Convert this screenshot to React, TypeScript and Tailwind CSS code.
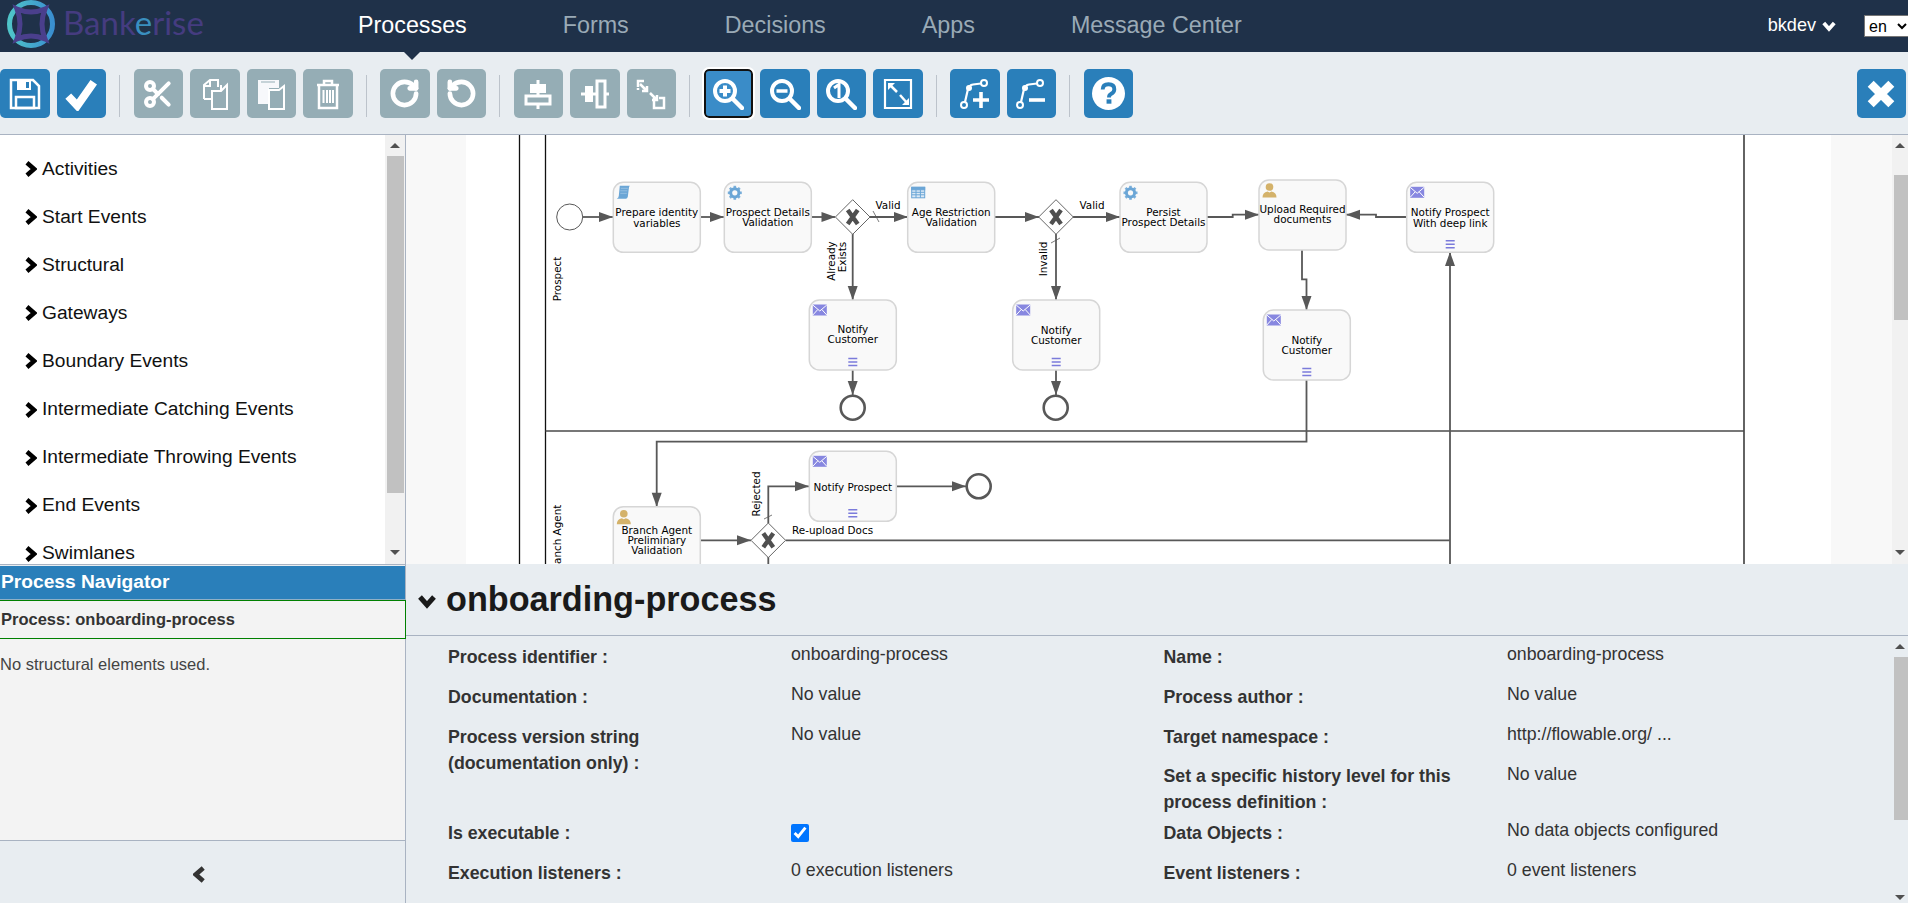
import React from 'react';
import { Scissors, RotateCw, RotateCcw } from 'lucide-react';

const Chevron: React.FC<{ dir: 'right' | 'down' | 'left'; className: string }> = ({ dir, className }) => {
    const points = dir === 'right' ? '3,2 11,9 3,16' : dir === 'left' ? '11,2 3,9 11,16' : '2,4 9,12 16,4';
    return (
        <svg viewBox={dir === 'down' ? '0 0 18 16' : '0 0 14 18'} className={className}>
            <polyline points={points} fill="none" stroke="currentColor" strokeWidth="5" />
        </svg>
    );
};

const I: React.FC<{ children: React.ReactNode; className?: string }> = ({ children, className = 'w-[32px] h-[32px]' }) => (
    <svg viewBox="0 0 32 32" className={className} fill="none" stroke="#fff" strokeWidth="2">{children}</svg>
);

// Toolbar glyphs, drawn to follow the reference strokes
const icons: Record<string, React.ReactNode> = {
    save: (
        <I>
            <path d="M2 2H24L30 8V30H2Z" strokeWidth="2.5" />
            <path d="M8 2H22V12H8Z" fill="#fff" stroke="none" />
            <path d="M17 4H20V10H17Z" fill="#2a7fba" stroke="none" />
            <path d="M7 19H25V30H7Z" strokeWidth="2.5" />
        </I>
    ),
    check: (
        <I className="w-[34px] h-[34px]">
            <path d="M4 18L12.5 27L28 5" strokeWidth="7.5" />
        </I>
    ),
    cut: <Scissors className="w-[32px] h-[32px] text-white" strokeWidth={3} />,
    copy: (
        <I>
            <path d="M5 21V7L11 2H19V9" />
            <path d="M5 21H12" />
            <path d="M11 2V8H5" />
            <path d="M13 13H22L28 7V31H13Z" />
            <path d="M22 7V13" />
        </I>
    ),
    paste: (
        <I>
            <path d="M3 2H24V10H14V26H3Z" fill="#f7f8fb" stroke="none" />
            <path d="M6 4H20" stroke="#95adb5" strokeWidth="1" />
            <path d="M14 12H24L29 8V31H14Z" />
        </I>
    ),
    trash: (
        <I>
            <path d="M5 7H27M12 7V3H20V7" strokeWidth="2.5" />
            <path d="M7 7V30H25V7" strokeWidth="2.5" />
            <path d="M11.5 12V25M15 12V25M18 12V25M21 12V25" strokeWidth="2" />
        </I>
    ),
    redo: <RotateCw className="w-[31px] h-[31px] text-white" strokeWidth={3.6} />,
    undo: <RotateCcw className="w-[31px] h-[31px] text-white" strokeWidth={3.6} />,
    alignV: (
        <I>
            <path d="M16 2V31" strokeWidth="3" />
            <path d="M9 7H23V14H9Z" fill="#fff" stroke="#fff" />
            <path d="M4 18H28V26H4Z" fill="#95adb5" strokeWidth="3" />
        </I>
    ),
    alignH: (
        <I>
            <path d="M2 16H30" strokeWidth="3" />
            <path d="M7 9H13V23H7Z" fill="#fff" stroke="#fff" />
            <path d="M18 3H26V29H18Z" fill="#95adb5" strokeWidth="3" />
        </I>
    ),
    sameSize: (
        <I>
            <path d="M3 9V3H9M3 12V10" strokeWidth="2.5" />
            <path d="M5 6L12 13M12 8V13H7" strokeWidth="2.5" />
            <path d="M19 20V30H29V20H24" strokeWidth="2.5" />
            <path d="M15 15L22 22M22 17V22H17" strokeWidth="2.5" />
        </I>
    ),
    zoomIn: (
        <I>
            <circle cx="13" cy="13" r="10" strokeWidth="4" />
            <path d="M21 21L30 30" strokeWidth="4.5" strokeLinecap="round" />
            <path d="M13 7.5V18.5M7.5 13H18.5" strokeWidth="4" />
        </I>
    ),
    zoomOut: (
        <I>
            <circle cx="13" cy="13" r="10" strokeWidth="4" />
            <path d="M21 21L30 30" strokeWidth="4.5" strokeLinecap="round" />
            <path d="M7.5 13H18.5" strokeWidth="3.5" />
        </I>
    ),
    zoomOne: (
        <I>
            <circle cx="13" cy="13" r="10" strokeWidth="4" />
            <path d="M21 21L30 30" strokeWidth="4.5" strokeLinecap="round" />
            <path d="M9 10L14 6.5V20" strokeWidth="3" />
        </I>
    ),
    fit: (
        <I>
            <path d="M3 2H29V30H3Z" strokeWidth="2.2" />
            <path d="M7 6L15 14" strokeWidth="2.5" />
            <path d="M6 5H13L6 12Z" fill="#fff" stroke="none" />
            <path d="M18 17L26 26" strokeWidth="2.5" />
            <path d="M27 27H20L27 20Z" fill="#fff" stroke="none" />
        </I>
    ),
    bendAdd: (
        <I>
            <circle cx="5" cy="27" r="3" />
            <circle cx="25" cy="5" r="3" />
            <path d="M6 24L9 11Q10 7 14 6.5L22 5.5" strokeWidth="2.2" />
            <circle cx="10" cy="10" r="3" fill="#fff" stroke="none" />
            <path d="M22 14V30M14 22H30" strokeWidth="3.6" />
        </I>
    ),
    bendRemove: (
        <I>
            <circle cx="5" cy="27" r="3" />
            <circle cx="25" cy="5" r="3" />
            <path d="M6 24L9 11Q10 7 14 6.5L22 5.5" strokeWidth="2.2" />
            <circle cx="10" cy="10" r="3" fill="#fff" stroke="none" />
            <path d="M14 22H30" strokeWidth="3.6" />
        </I>
    ),
    help: (
        <svg viewBox="0 0 34 34" className="w-[33px] h-[33px]">
            <circle cx="17" cy="17" r="17" fill="#fff" />
            <path d="M11 13Q11 7.5 17 7.5Q23 7.5 23 12.5Q23 15.5 19.5 17.5Q17.5 18.5 17.5 21" fill="none" stroke="#2a7fba" strokeWidth="4" />
            <rect x="15" y="23" width="5" height="4.5" fill="#2a7fba" />
        </svg>
    ),
    close: (
        <I className="w-[30px] h-[30px]">
            <path d="M5 5L27 27M27 5L5 27" strokeWidth="9" />
        </I>
    ),
};

const ToolButton: React.FC<{ icon: string; disabled?: boolean; focused?: boolean }> = ({ icon, disabled, focused }) => (
    <button
        className={
            'w-[49.5px] h-[49px] shrink-0 rounded-[5px] flex items-center justify-center ' +
            (disabled
                ? 'bg-[#95adb5]'
                : focused
                  ? 'bg-[#3a8cc8] border-2 border-[#111] outline-2 outline-white'
                  : 'bg-[#2a7fba]')
        }
    >
        {icons[icon]}
    </button>
);

const Sep = () => <div className="w-px h-[42px] mt-[6px] mx-[6.25px] bg-[#bcc3cb] shrink-0" />;

const ScrollTrack: React.FC<{ width: string; top: string; thumb: string; bottom: string; tone?: string }> = ({ width, top, thumb, bottom, tone = 'bg-[#f1f1f1]' }) => (
    <div className={'shrink-0 flex flex-col items-end ' + width + ' ' + tone}>
        <div className={'w-full flex items-center justify-center ' + top}>
            <div className="w-0 h-0 border-x-[5px] border-x-transparent border-b-[5px] border-b-[#505050]" />
        </div>
        <div className={'w-[14px] bg-[#c1c1c1] ' + thumb} />
        <div className={'mt-auto w-full flex items-center justify-center ' + bottom}>
            <div className="w-0 h-0 border-x-[5px] border-x-transparent border-t-[5px] border-t-[#505050]" />
        </div>
    </div>
);

const Task: React.FC<{ x: number; y: number; lines: [string, number][]; kind: string; menu?: boolean; h?: number }> = ({ x, y, lines, kind, menu, h = 70 }) => (
    <g>
        <rect x={x} y={y} width="87" height={h} rx="10" fill="#f9f9f9" stroke="#d6d6d6" strokeWidth="1.5" />
        <TaskIcon kind={kind} x={x + 3.5} y={y + 3.5} />
        {lines.map(([t, ty]) => (
            <text key={t} x={x + 43.5} y={ty + 3.5} textAnchor="middle">{t}</text>
        ))}
        {menu && (
            <path d={`M${x + 39} ${y + 58.5}H${x + 48}M${x + 39} ${y + 62}H${x + 48}M${x + 39} ${y + 65.5}H${x + 48}`} stroke="#7b7bdb" strokeWidth="1.5" />
        )}
    </g>
);

const TaskIcon: React.FC<{ kind: string; x: number; y: number }> = ({ kind, x, y }) => {
    if (kind === 'mail')
        return (
            <g transform={`translate(${x} ${y + 1})`}>
                <rect width="14" height="11" fill="#8787e0" />
                <path d="M0 0.5L7 6.5L14 0.5M0 10.5L5 5M14 10.5L9 5" fill="none" stroke="#fff" strokeWidth="1" />
            </g>
        );
    if (kind === 'gear')
        return (
            <g transform={`translate(${x + 7} ${y + 7})`}>
                <circle r="4.2" fill="none" stroke="#6ba6d6" strokeWidth="2.8" />
                {[0, 45, 90, 135].map((a) => (
                    <rect key={a} x="-1.3" y="-7" width="2.6" height="14" fill="#6ba6d6" transform={`rotate(${a})`} opacity="0.9" />
                ))}
                <circle r="2.6" fill="#f9f9f9" />
            </g>
        );
    if (kind === 'table')
        return (
            <g transform={`translate(${x} ${y + 1})`} fill="none" stroke="#6ba6d6" strokeWidth="1">
                <rect x="0.5" y="0.5" width="13" height="10.5" fill="#dbe9f5" />
                <rect x="0.5" y="0.5" width="13" height="2.5" fill="#6ba6d6" />
                <path d="M0.5 5.5H13.5M0.5 8H13.5M4.8 3V11M9.2 3V11" />
            </g>
        );
    if (kind === 'script')
        return (
            <g transform={`translate(${x} ${y})`}>
                <path d="M3 0H13Q12 1 12 3L11 11Q10.5 13 9 13H0Q2 12 2 10Z" fill="#6ba6d6" />
                <path d="M4 2.5H11M3.5 5H10.5M3.5 7.5H10" stroke="#a9cbe6" strokeWidth="0.7" />
            </g>
        );
    return (
        <g transform={`translate(${x} ${y - 1})`} fill="#d4b26a">
            <circle cx="7" cy="4.5" r="3.8" />
            <path d="M0 15Q0 10 5 9L7 10L9 9Q14 10 14 15Z" />
        </g>
    );
};

const Gateway: React.FC<{ x: number; y: number }> = ({ x, y }) => (
    <g>
        <path d={`M${x} ${y - 17.3}L${x + 17.3} ${y}L${x} ${y + 17.3}L${x - 17.3} ${y}Z`} fill="#fff" stroke="#666" strokeWidth="1" />
        <path d={`M${x - 5} ${y - 7}L${x + 5} ${y + 7}M${x + 5} ${y - 7}L${x - 5} ${y + 7}`} stroke="#4f4f4f" strokeWidth="4.4" />
    </g>
);

const Flow: React.FC<{ d: string; tip?: [number, number, 'r' | 'l' | 'u' | 'd'] }> = ({ d, tip }) => {
    let head = '';
    if (tip) {
        const [x, y, dir] = tip;
        if (dir === 'r') head = `${x},${y} ${x - 14},${y - 5} ${x - 14},${y + 5}`;
        if (dir === 'l') head = `${x},${y} ${x + 14},${y - 5} ${x + 14},${y + 5}`;
        if (dir === 'd') head = `${x},${y} ${x - 5},${y - 14} ${x + 5},${y - 14}`;
        if (dir === 'u') head = `${x},${y} ${x - 5},${y + 14} ${x + 5},${y + 14}`;
    }
    return (
        <g>
            <path d={d} fill="none" stroke="#585858" strokeWidth="1.8" />
            {tip && <polygon points={head} fill="#585858" />}
        </g>
    );
};

const Diagram = () => (
    <svg viewBox="466 135 1365 429" className="flex-1 h-full min-w-0 font-['DejaVu_Sans',sans-serif] text-[10.4px]">
        {/* Pool and lanes */}
        <path d="M519.5 135V564M545.5 135V564M1744 135V564" stroke="#111" strokeWidth="1.3" fill="none" />
        <path d="M545.5 431H1744" stroke="#4a4a4a" strokeWidth="1.5" />

        {/* Flows */}
        <Flow d="M583 217H613" tip={[613, 217, 'r']} />
        <Flow d="M700 217H724" tip={[724, 217, 'r']} />
        <Flow d="M811 217H835" tip={[835.5, 217, 'r']} />
        <Flow d="M870 217H908" tip={[908, 217, 'r']} />
        <Flow d="M852.7 234V300" tip={[852.7, 300, 'd']} />
        <Flow d="M995 217H1039" tip={[1039, 217, 'r']} />
        <Flow d="M1073 217H1120" tip={[1120, 217, 'r']} />
        <Flow d="M1056 234V300" tip={[1056, 300, 'd']} />
        <Flow d="M1207 217H1232.7V214.7H1259" tip={[1259, 214.7, 'r']} />
        <Flow d="M1407 217H1376V214.7H1346" tip={[1346, 214.7, 'l']} />
        <Flow d="M1302 249V279.3H1306.5V310" tip={[1306.5, 310, 'd']} />
        <Flow d="M852.7 369V395" tip={[852.7, 395, 'd']} />
        <Flow d="M1056 369V395" tip={[1056, 395, 'd']} />
        <Flow d="M1306.5 379V441.7H656.7V506.7" tip={[656.7, 506.7, 'd']} />
        <Flow d="M768.3 523V486.3H809" tip={[809, 486.3, 'r']} />
        <Flow d="M896 486.3H966" tip={[966, 486.3, 'r']} />
        <Flow d="M700 540.3H751" tip={[751, 540.3, 'r']} />
        <Flow d="M785.6 540.3H1450M1450 564V252" tip={[1450, 252, 'u']} />
        <Flow d="M768.3 557V564" />

        {/* Default flow ticks */}
        <path d="M873 211L879 222M1051 243L1060 238M764 519L772 515" stroke="#585858" strokeWidth="0.8" />

        <circle cx="569.7" cy="217" r="13" fill="#fff" stroke="#585858" strokeWidth="1" />
        <circle cx="852.7" cy="407.7" r="12" fill="#fff" stroke="#585858" strokeWidth="2.6" />
        <circle cx="1055.7" cy="407.7" r="12" fill="#fff" stroke="#585858" strokeWidth="2.6" />
        <circle cx="978.7" cy="486.3" r="12" fill="#fff" stroke="#585858" strokeWidth="2.6" />

        <Gateway x={852.7} y={217} />
        <Gateway x={1056} y={217} />
        <Gateway x={768.3} y={540.3} />

        <Task x={613.3} y={182.3} kind="script" lines={[['Prepare identity', 212.7], ['variables', 223.7]]} />
        <Task x={724.3} y={182.3} kind="gear" lines={[['Prospect Details', 212.7], ['Validation', 222.7]]} />
        <Task x={907.7} y={182.3} kind="table" lines={[['Age Restriction', 212.7], ['Validation', 222.7]]} />
        <Task x={1120} y={182.3} kind="gear" lines={[['Persist', 212.7], ['Prospect Details', 222.7]]} />
        <Task x={1259} y={180} kind="user" lines={[['Upload Required', 209.7], ['documents', 219.7]]} />
        <Task x={1406.7} y={182.3} kind="mail" menu lines={[['Notify Prospect', 212.7], ['With deep link', 223.7]]} />
        <Task x={809.3} y={300} kind="mail" menu lines={[['Notify', 329.3], ['Customer', 339.3]]} />
        <Task x={1012.7} y={300} kind="mail" menu lines={[['Notify', 330.3], ['Customer', 340.3]]} />
        <Task x={1263.3} y={310} kind="mail" menu lines={[['Notify', 340.3], ['Customer', 350.3]]} />
        <Task x={809.3} y={451.3} kind="mail" menu lines={[['Notify Prospect', 487.7]]} />
        <Task x={613.3} y={506.7} kind="user" lines={[['Branch Agent', 530.3], ['Preliminary', 540.3], ['Validation', 550.3]]} />

        {/* Labels */}
        <text x="888" y="209" textAnchor="middle">Valid</text>
        <text x="1092" y="209" textAnchor="middle">Valid</text>
        <text x="792" y="534">Re-upload Docs</text>
        <text transform="rotate(-90 561 279)" x="561" y="279" textAnchor="middle">Prospect</text>
        <text transform="rotate(-90 561 540)" x="561" y="540" textAnchor="middle">Branch Agent</text>
        <text transform="rotate(-90 835 261)" x="835" y="261" textAnchor="middle">Already</text>
        <text transform="rotate(-90 846 257)" x="846" y="257" textAnchor="middle">Exists</text>
        <text transform="rotate(-90 1047 259)" x="1047" y="259" textAnchor="middle">Invalid</text>
        <text transform="rotate(-90 760 494)" x="760" y="494" textAnchor="middle">Rejected</text>
    </svg>
);

const palette = ['Activities', 'Start Events', 'Structural', 'Gateways', 'Boundary Events', 'Intermediate Catching Events', 'Intermediate Throwing Events', 'End Events', 'Swimlanes'];
const nav = ['Processes', 'Forms', 'Decisions', 'Apps', 'Message Center'];

const Label: React.FC<{ children: React.ReactNode; className?: string }> = ({ children, className = '' }) => (
    <div className={'font-bold text-[17.75px] leading-[26px] text-[#333] ' + className}>{children}</div>
);
const Value: React.FC<{ children: React.ReactNode; className?: string }> = ({ children, className = '' }) => (
    <div className={'text-[17.75px] leading-[20px] text-[#333] ' + className}>{children}</div>
);

const App: React.FC = () => {
    return (
        <div className="h-screen w-full overflow-hidden flex flex-col bg-[#e8edf1] font-['Liberation_Sans',sans-serif]">
            {/* Header */}
            <header className="h-[52px] shrink-0 bg-[#1f3149] flex items-center overflow-hidden relative z-10">
                <svg viewBox="0 0 48 48" className="w-[48px] h-[48px] ml-[7px] self-start shrink-0">
                    <defs>
                        <linearGradient id="ring" x1="0" y1="0" x2="1" y2="0">
                            <stop offset="0" stopColor="#4fc4c9" />
                            <stop offset="1" stopColor="#3a8fd0" />
                        </linearGradient>
                    </defs>
                    <circle cx="24" cy="24" r="21.5" fill="none" stroke="url(#ring)" strokeWidth="5" />
                    <path d="M10 9Q24 15 38 9Q32 24 38 39Q24 33 10 39Q16 24 10 9Z" fill="none" stroke="#4a3f8c" strokeWidth="5" />
                </svg>
                <div className="ml-[8px] text-[33px] leading-none font-['Lato',sans-serif] text-[#453c80] w-[155px] shrink-0 -mt-[8px]">
                    Bank<span className="text-[#3a8fc0]">e</span>rise
                </div>
                <nav className="flex items-center gap-[96px] ml-[140px] text-[23.3px] -mt-[2px]">
                    {nav.map((n, i) => (
                        <a key={n} className={i === 0 ? 'text-white' : 'text-[#9aaab6]'}>{n}</a>
                    ))}
                </nav>
                <div className="ml-auto flex items-center text-white text-[18.1px]">
                    bkdev
                    <Chevron dir="down" className="w-[14px] h-[12px] ml-[6px]" />
                </div>
                <select defaultValue="en" className="ml-[28px] mr-[-3px] w-[47px] h-[22px] bg-white text-black text-[16px] border border-[#767676] shrink-0">
                    <option value="en">en</option>
                </select>
            </header>

            {/* Toolbar */}
            <div className="h-[83px] shrink-0 border-b border-[#a9b3c2] pt-[17px] flex gap-[7px] relative">
                <div className="absolute left-[404px] top-0 w-0 h-0 border-x-[8px] border-x-transparent border-t-[8px] border-t-[#1f3149]" />
                <ToolButton icon="save" />
                <ToolButton icon="check" />
                <Sep />
                <ToolButton icon="cut" disabled />
                <ToolButton icon="copy" disabled />
                <ToolButton icon="paste" disabled />
                <ToolButton icon="trash" disabled />
                <Sep />
                <ToolButton icon="redo" disabled />
                <ToolButton icon="undo" disabled />
                <Sep />
                <ToolButton icon="alignV" disabled />
                <ToolButton icon="alignH" disabled />
                <ToolButton icon="sameSize" disabled />
                <Sep />
                <ToolButton icon="zoomIn" focused />
                <ToolButton icon="zoomOut" />
                <ToolButton icon="zoomOne" />
                <ToolButton icon="fit" />
                <Sep />
                <ToolButton icon="bendAdd" />
                <ToolButton icon="bendRemove" />
                <Sep />
                <ToolButton icon="help" />
                <div className="ml-auto mr-[2px]">
                    <ToolButton icon="close" />
                </div>
            </div>

            <div className="flex-1 min-h-0 flex">
                {/* Left column */}
                <aside className="w-[406px] shrink-0 border-r border-[#a9b3c2] flex flex-col">
                    <div className="h-[430px] shrink-0 bg-white border-b border-[#a9b3c2] flex">
                        <ul className="flex-1 pt-[10px] text-[19.2px] text-[#111]">
                            {palette.map((p) => (
                                <li key={p} className="h-[48.1px] flex items-center pl-[24px]">
                                    <Chevron dir="right" className="w-[13px] h-[16px] mr-[5px] text-black" />
                                    {p}
                                </li>
                            ))}
                        </ul>
                        <ScrollTrack width="w-[20px]" top="h-[21px]" thumb="h-[337px] mr-[1px] !w-[17px]" bottom="h-[24px]" />
                    </div>
                    <div className="h-[34px] shrink-0 bg-[#2a7fba] border-b border-[#8fb0c6] flex items-center text-white font-bold text-[19.2px] pl-px mt-px">
                        Process Navigator
                    </div>
                    <div className="h-[39px] shrink-0 bg-[#f3f3f3] border border-l-0 border-[#008000] -mr-px flex items-center font-bold text-[16.5px] text-[#333] pl-px">
                        Process: onboarding-process
                    </div>
                    <div className="flex-1 bg-[#f3f3f3] pt-[14px] text-[16.5px] text-[#444] leading-[22px]">
                        No structural elements used.
                    </div>
                    <div className="h-[63px] shrink-0 border-t border-[#a9b3c2] flex items-center justify-center pr-[6px] pt-[4px]">
                        <Chevron dir="left" className="w-[13px] h-[17px] text-[#333]" />
                    </div>
                </aside>

                {/* Right column */}
                <main className="flex-1 min-w-0 flex flex-col">
                    <div className="h-[429px] shrink-0 flex bg-white">
                        <div className="w-[60px] shrink-0 bg-[#f8f8f8]" />
                        <Diagram />
                        <div className="w-[61px] shrink-0 bg-[#f8f8f8]" />
                        <ScrollTrack width="w-[16px]" top="h-[21px]" thumb="mt-[19px] h-[145px]" bottom="h-[24px]" />
                    </div>
                    <div className="h-[72px] shrink-0 border-b border-[#a9b3c2] flex items-center pl-[11px]">
                        <Chevron dir="down" className="w-[20px] h-[16px] text-[#1a1a1a] mr-[9px] mt-[3px]" />
                        <h2 className="text-[34.2px] font-bold text-[#1a1a1a] leading-none -mt-px">onboarding-process</h2>
                    </div>
                    <div className="flex-1 min-h-0 flex">
                        <div className="flex-1 pl-[42px] pt-[8px] grid grid-cols-[343px_372.5px_343.5px_1fr] grid-rows-[40px_40px_40px_56px_40px_40px] items-start">
                            <Label>Process identifier :</Label>
                            <Value>onboarding-process</Value>
                            <Label>Name :</Label>
                            <Value>onboarding-process</Value>

                            <Label>Documentation :</Label>
                            <Value>No value</Value>
                            <Label>Process author :</Label>
                            <Value>No value</Value>

                            <Label className="row-span-2">Process version string<br />(documentation only) :</Label>
                            <Value className="row-span-2">No value</Value>
                            <Label>Target namespace :</Label>
                            <Value>http://flowable.org/ ...</Value>

                            <Label className="col-start-3 !leading-[25.5px]">Set a specific history level for this<br />process definition :</Label>
                            <Value>No value</Value>

                            <Label>Is executable :</Label>
                            <input type="checkbox" defaultChecked className="w-[18px] h-[18px] mt-[4px]" />
                            <Label>Data Objects :</Label>
                            <Value>No data objects configured</Value>

                            <Label>Execution listeners :</Label>
                            <Value>0 execution listeners</Value>
                            <Label>Event listeners :</Label>
                            <Value>0 event listeners</Value>
                        </div>
                        <ScrollTrack width="w-[16px]" top="h-[21px]" thumb="h-[163px]" bottom="h-[12px]" tone="bg-[#e8edf1]" />
                    </div>
                </main>
            </div>
        </div>
    );
};

export default App;
